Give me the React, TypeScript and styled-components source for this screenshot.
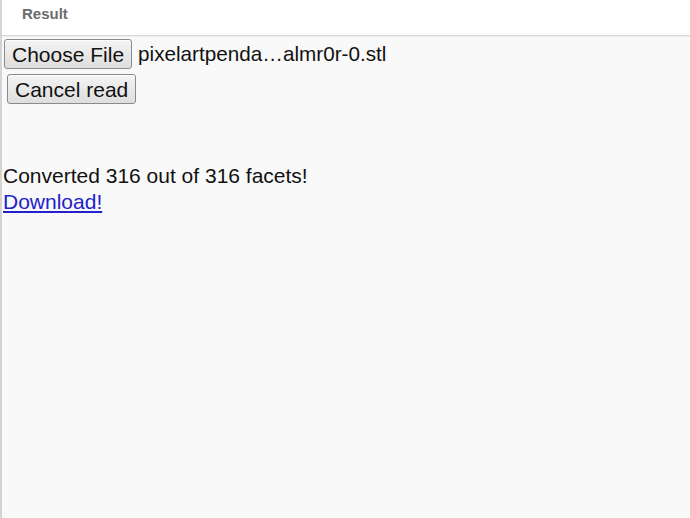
import styled, { createGlobalStyle } from "styled-components";

const GlobalStyle = createGlobalStyle`
  html, body {
    margin: 0;
    padding: 0;
    background: #f9f9f9;
  }
  body {
    font-family: "Liberation Sans", Arial, sans-serif;
  }
`;

const Frame = styled.div`
  width: 690px;
  height: 518px;
  box-sizing: border-box;
  border-left: 2px solid #d4d4d4;
  background: #f9f9f9;
  display: flex;
  flex-direction: column;
  overflow: hidden;
`;

const Header = styled.div`
  height: 36px;
  flex-shrink: 0;
  background: #ffffff;
  border-bottom: 1px solid #d8d8d8;
  box-shadow: 0 1px 0 #ececec;
  display: flex;
  align-items: center;
  padding-left: 20px;
  padding-bottom: 8px;
  box-sizing: border-box;
`;

const Title = styled.span`
  font-family: "Liberation Sans", Arial, sans-serif;
  font-weight: bold;
  font-size: 15px;
  color: #6b6b6b;
`;

const Body = styled.div`
  padding: 0 0 0 1px;
  display: flex;
  flex-direction: column;
  align-items: flex-start;
  font-family: "Liberation Sans", Arial, sans-serif;
  font-size: 21px;
  color: #111;
`;

const Row = styled.div<{ $indent?: number; $top?: number }>`
  display: flex;
  align-items: center;
  gap: 6px;
  margin-left: ${(p) => p.$indent ?? 0}px;
  margin-top: ${(p) => p.$top ?? 4}px;
`;

const Button = styled.button`
  font-family: "Liberation Sans", Arial, sans-serif;
  font-size: 21px;
  color: #111;
  height: 30px;
  padding: 0 7px;
  border: 1px solid #8a8a8a;
  border-radius: 3px;
  background: linear-gradient(#f4f4f4, #dedede);
  box-shadow: inset 0 1px 0 #fff;
  line-height: 1;
`;

const FileName = styled.span`
  font-size: 20.7px;
  color: #111;
`;

const Message = styled.div`
  margin-top: 58px;
  line-height: 28px;
`;

const DownloadLink = styled.a`
  color: #2222cc;
  text-decoration: underline;
  line-height: 24px;
`;

export default function App() {
  return (
    <>
      <GlobalStyle />
      <Frame>
        <Header>
          <Title>Result</Title>
        </Header>
        <Body>
          <Row $indent={1} $top={3}>
            <Button>Choose File</Button>
            <FileName>pixelartpenda…almr0r-0.stl</FileName>
          </Row>
          <Row $indent={4} $top={5}>
            <Button>Cancel read</Button>
          </Row>
          <Message>Converted 316 out of 316 facets!</Message>
          <DownloadLink href="#">Download!</DownloadLink>
        </Body>
      </Frame>
    </>
  );
}
